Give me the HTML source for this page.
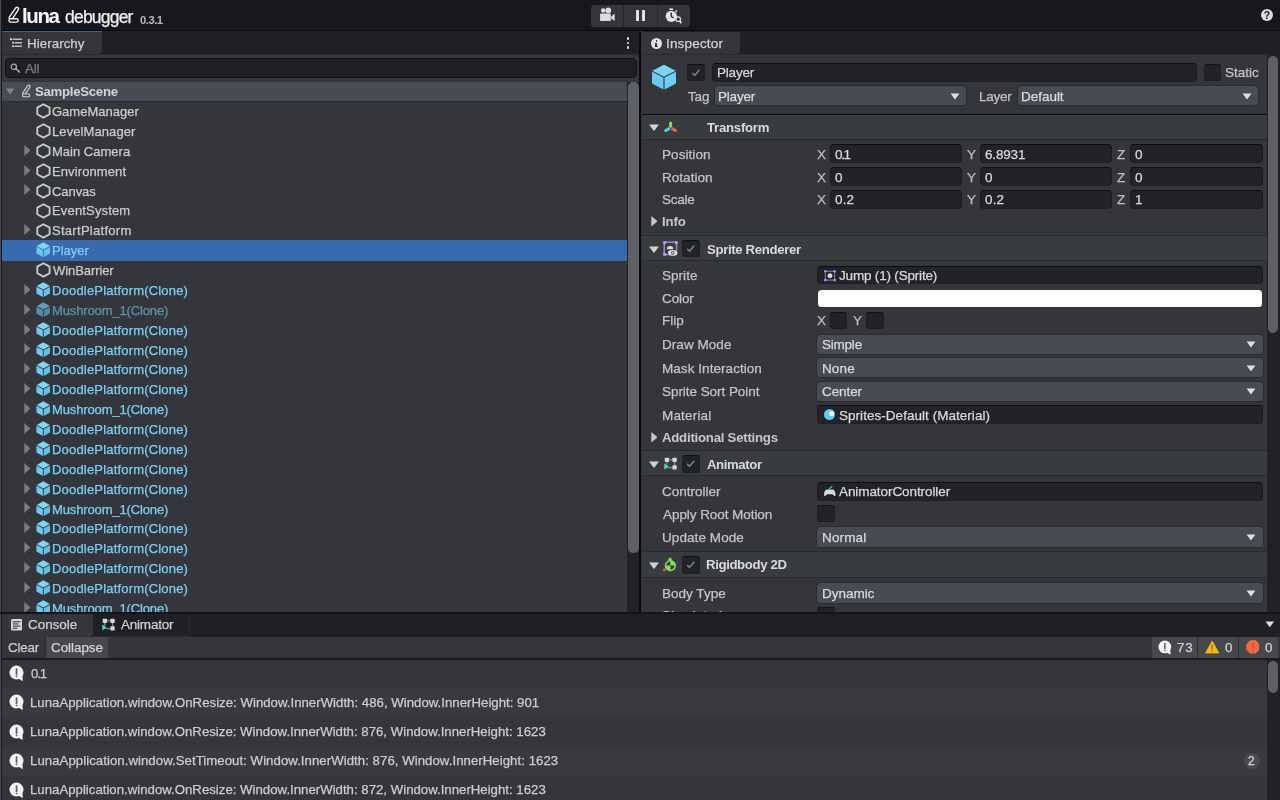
<!DOCTYPE html>
<html><head><meta charset="utf-8"><title>luna debugger</title>
<style>
*{box-sizing:border-box;margin:0;padding:0}
html,body{width:1280px;height:800px;overflow:hidden;background:#35363b}
body{font-family:"Liberation Sans",sans-serif;font-size:13px;color:#d2d2d2;position:relative}
#r{position:absolute;left:0;top:0;width:1280px;height:800px;overflow:hidden;will-change:transform}
.ab{position:absolute}
.t{position:absolute;white-space:nowrap;line-height:20px;height:20px;-webkit-text-stroke:.25px}
.b{font-weight:bold;-webkit-text-stroke:0}
.cb{background:#222328;border-radius:2.5px;border:1px solid #1e1f23;border-top:1.3px solid #121316}
.inp{position:absolute;background:#222328;border-radius:4px;border-top:1.1px solid #0c0d0f;border-left:1px solid #1b1c20;border-right:1px solid #1b1c20;border-bottom:1px solid #202125}
.dd{position:absolute;background:#474b54;border-radius:3.5px;box-shadow:0 0 0 .9px #2b2c31}
.hd{position:absolute;left:641.5px;width:625.5px;background:#393c3f;border-top:1.5px solid #1b1c1f;border-bottom:1px solid #2a2b2f}
</style></head><body><div id="r">

<div class="ab" style="left:0;top:0;width:1280px;height:31.4px;background:#16181d;border-bottom:1.6px solid #09090b"></div>
<svg class="ab" style="left:7px;top:6px" width="14" height="18" viewBox="0 0 14 18"><path d="M3.9 11.9 L9.9 3.0" stroke="#f2f2f2" stroke-width="4.7" stroke-linecap="round"/><path d="M3.9 11.9 L9.9 3.0" stroke="#16181d" stroke-width="1.9" stroke-linecap="round"/><path d="M3.75 14.45 L9.45 14.45" stroke="#f2f2f2" stroke-width="4.8" stroke-linecap="round"/><path d="M3.75 14.45 L9.45 14.45" stroke="#16181d" stroke-width="2.1" stroke-linecap="round"/></svg>
<div class="t b" style="left:22px;top:3.5px;font-size:20.5px;color:#fff;line-height:24px;height:24px;letter-spacing:-1.397px;">luna</div>
<div class="t" style="left:65px;top:6.0px;font-size:17.5px;color:#f0f0f0;line-height:22px;height:22px;letter-spacing:-0.789px;">debugger</div>
<div class="t b" style="left:140px;top:12.0px;font-size:11.3px;color:#b6b7ba;line-height:16px;height:16px;letter-spacing:-0.503px;">0.3.1</div>
<div class="ab" style="left:591px;top:4.7px;width:99px;height:21.9px;background:#35363b;border-radius:3.5px"></div>
<div class="ab" style="left:623px;top:4.7px;width:1px;height:21.9px;background:#26272b;"></div>
<div class="ab" style="left:656.8px;top:4.7px;width:1px;height:21.9px;background:#26272b;"></div>
<svg class="ab" style="left:599px;top:7px" width="17" height="15" viewBox="0 0 17 15"><g fill="#dadde0"><circle cx="4.2" cy="3.6" r="2.25"/><circle cx="9.3" cy="3.4" r="2.85"/><rect x="1.1" y="6.4" width="10.7" height="7.7" rx="0.9"/><path d="M11.8 10 L15.7 6.6 L15.7 13.8 L11.8 11.6Z"/></g></svg>
<div class="ab" style="left:635.9px;top:9.6px;width:3.4px;height:11px;background:#dfe1e3;border-radius:.6px"></div>
<div class="ab" style="left:641.7px;top:9.6px;width:3.4px;height:11px;background:#dfe1e3;border-radius:.6px"></div>
<svg class="ab" style="left:665px;top:7.5px" width="18" height="17" viewBox="0 0 18 17"><rect x="4.4" y="0.4" width="3.6" height="1.6" fill="#e4e4e4"/><path d="M10.6 2.6 L11.9 3.9" stroke="#e4e4e4" stroke-width="1.4"/><circle cx="6.3" cy="8.3" r="5.6" fill="#e4e4e4"/><path d="M6.3 4.6 L6.3 8.6 L8.6 9.8" stroke="#35363b" stroke-width="1.5" fill="none"/><circle cx="13.2" cy="11.2" r="2.3" fill="#35363b" stroke="#e4e4e4" stroke-width="1.2"/><path d="M14.7 13 L16.4 15.2" stroke="#e4e4e4" stroke-width="1.5"/></svg>
<div class="ab" style="left:1260.9px;top:9px;width:12.1px;height:12.1px;border-radius:50%;background:#d9dde0"></div>
<div class="ab" style="left:1260.9px;top:9.4px;width:12.1px;height:12px;color:#16181d;font-size:10.5px;font-weight:bold;line-height:12px;text-align:center">?</div>
<div class="ab" style="left:1278.9px;top:31px;width:1.1px;height:769px;background:#000;"></div>
<div class="ab" style="left:0px;top:0px;width:1.2px;height:800px;background:#4a4c52;"></div>
<div class="ab" style="left:1.2px;top:31px;width:1px;height:769px;background:#17181b;"></div>
<div class="ab" style="left:2px;top:31px;width:637.5px;height:23.3px;background:#1f2025;"></div>
<div class="ab" style="left:2px;top:31.2px;width:99.5px;height:23px;background:#35363b;border-top:1.9px solid #38659f;border-bottom-right-radius:4px"></div>
<svg class="ab" style="left:10px;top:38.3px" width="12.4" height="9.4" viewBox="0 0 12.4 9.4"><g fill="#d4d4d4"><rect x="0" y="0.2" width="2" height="2"/><rect x="2.1" y="3.8" width="1.8" height="1.8"/><rect x="2.1" y="7.3" width="1.8" height="1.8"/></g><g fill="#bcbcbc"><rect x="2.6" y="0.5" width="9.6" height="1.5"/><rect x="4.5" y="4" width="7.7" height="1.5"/><rect x="4.5" y="7.5" width="7.7" height="1.5"/></g></svg>
<div class="t" style="left:27px;top:33.5px;font-size:13.3px;color:#cdcdcd;letter-spacing:0.073px;">Hierarchy</div>
<div class="ab" style="left:626.6px;top:37.3px;width:2.6px;height:2.6px;background:#e0e0e0;border-radius:50%"></div>
<div class="ab" style="left:626.6px;top:41.8px;width:2.6px;height:2.6px;background:#e0e0e0;border-radius:50%"></div>
<div class="ab" style="left:626.6px;top:46.3px;width:2.6px;height:2.6px;background:#e0e0e0;border-radius:50%"></div>
<div class="ab" style="left:4.8px;top:58.3px;width:632.4px;height:19.6px;background:#1f2025;border:1.2px solid #101114;border-radius:4.5px"></div>
<svg class="ab" style="left:10.2px;top:63.3px" width="11" height="11" viewBox="0 0 11 11"><circle cx="3.8" cy="3.8" r="2.65" fill="none" stroke="#adadad" stroke-width="1.2"/><path d="M5.8 5.8 L9.6 9.1" stroke="#adadad" stroke-width="1.45" stroke-linecap="round"/></svg>
<div class="t" style="left:25px;top:58.5px;font-size:13.5px;color:#7a7b7f;letter-spacing:-0.264px;">All</div>
<div class="ab" style="left:2px;top:81.6px;width:625.3px;height:19.575px;background:#474b54;"></div>
<div class="ab" style="left:2px;top:100.975px;width:625.3px;height:1px;background:#2a2b2f;"></div>
<svg class="ab" style="left:5px;top:88.19999999999999px" width="10" height="6.6" viewBox="0 0 10 7"><path d="M0.3 0.5 L9.7 0.5 L5 6.8Z" fill="#808186"/></svg>
<svg class="ab" style="left:21.2px;top:84.0px" width="11" height="14.2" viewBox="0 0 14 18"><path d="M3.9 11.9 L9.9 3.0" stroke="#d0d0d0" stroke-width="4.7" stroke-linecap="round"/><path d="M3.9 11.9 L9.9 3.0" stroke="#474b54" stroke-width="1.9" stroke-linecap="round"/><path d="M3.75 14.45 L9.45 14.45" stroke="#d0d0d0" stroke-width="4.8" stroke-linecap="round"/><path d="M3.75 14.45 L9.45 14.45" stroke="#474b54" stroke-width="2.1" stroke-linecap="round"/></svg>
<div class="t b" style="left:35px;top:81.5px;font-size:13.2px;color:#d4d4d4;letter-spacing:-0.276px;">SampleScene</div>
<div class="ab" style="left:0;top:101px;width:639px;height:511px;overflow:hidden">
<svg class="ab" style="left:35.65px;top:2.475px" width="15" height="16" viewBox="0 0 15 16"><path d="M7.45 1.25 L13.6 4.65 L13.6 11.2 L7.45 14.6 L1.3 11.2 L1.3 4.65Z" fill="none" stroke="#c6cbce" stroke-width="1.85" stroke-linejoin="round"/></svg>
<div class="t" style="left:52px;top:0.5px;font-size:13px;color:#cccccc;letter-spacing:0.002px;">GameManager</div>
<svg class="ab" style="left:35.65px;top:22.35px" width="15" height="16" viewBox="0 0 15 16"><path d="M7.45 1.25 L13.6 4.65 L13.6 11.2 L7.45 14.6 L1.3 11.2 L1.3 4.65Z" fill="none" stroke="#c6cbce" stroke-width="1.85" stroke-linejoin="round"/></svg>
<div class="t" style="left:52px;top:20.5px;font-size:13px;color:#cccccc;letter-spacing:0.089px;">LevelManager</div>
<svg class="ab" style="left:23.5px;top:43.725px" width="6.8" height="11" viewBox="0 0 7 10.4" preserveAspectRatio="none"><path d="M0.3 0.1 L6.8 5.2 L0.3 10.3Z" fill="#7b7c80"/></svg>
<svg class="ab" style="left:35.65px;top:42.225px" width="15" height="16" viewBox="0 0 15 16"><path d="M7.45 1.25 L13.6 4.65 L13.6 11.2 L7.45 14.6 L1.3 11.2 L1.3 4.65Z" fill="none" stroke="#c6cbce" stroke-width="1.85" stroke-linejoin="round"/></svg>
<div class="t" style="left:52px;top:40.5px;font-size:13px;color:#cccccc;letter-spacing:0.012px;">Main Camera</div>
<svg class="ab" style="left:23.5px;top:63.6px" width="6.8" height="11" viewBox="0 0 7 10.4" preserveAspectRatio="none"><path d="M0.3 0.1 L6.8 5.2 L0.3 10.3Z" fill="#7b7c80"/></svg>
<svg class="ab" style="left:35.65px;top:62.1px" width="15" height="16" viewBox="0 0 15 16"><path d="M7.45 1.25 L13.6 4.65 L13.6 11.2 L7.45 14.6 L1.3 11.2 L1.3 4.65Z" fill="none" stroke="#c6cbce" stroke-width="1.85" stroke-linejoin="round"/></svg>
<div class="t" style="left:52px;top:60.5px;font-size:13px;color:#cccccc;letter-spacing:0.103px;">Environment</div>
<svg class="ab" style="left:23.5px;top:83.475px" width="6.8" height="11" viewBox="0 0 7 10.4" preserveAspectRatio="none"><path d="M0.3 0.1 L6.8 5.2 L0.3 10.3Z" fill="#7b7c80"/></svg>
<svg class="ab" style="left:35.65px;top:81.975px" width="15" height="16" viewBox="0 0 15 16"><path d="M7.45 1.25 L13.6 4.65 L13.6 11.2 L7.45 14.6 L1.3 11.2 L1.3 4.65Z" fill="none" stroke="#c6cbce" stroke-width="1.85" stroke-linejoin="round"/></svg>
<div class="t" style="left:52px;top:80.5px;font-size:13px;color:#cccccc;letter-spacing:-0.063px;">Canvas</div>
<svg class="ab" style="left:35.65px;top:101.85px" width="15" height="16" viewBox="0 0 15 16"><path d="M7.45 1.25 L13.6 4.65 L13.6 11.2 L7.45 14.6 L1.3 11.2 L1.3 4.65Z" fill="none" stroke="#c6cbce" stroke-width="1.85" stroke-linejoin="round"/></svg>
<div class="t" style="left:52px;top:99.5px;font-size:13px;color:#cccccc;letter-spacing:0.161px;">EventSystem</div>
<svg class="ab" style="left:23.5px;top:123.225px" width="6.8" height="11" viewBox="0 0 7 10.4" preserveAspectRatio="none"><path d="M0.3 0.1 L6.8 5.2 L0.3 10.3Z" fill="#7b7c80"/></svg>
<svg class="ab" style="left:35.65px;top:121.725px" width="15" height="16" viewBox="0 0 15 16"><path d="M7.45 1.25 L13.6 4.65 L13.6 11.2 L7.45 14.6 L1.3 11.2 L1.3 4.65Z" fill="none" stroke="#c6cbce" stroke-width="1.85" stroke-linejoin="round"/></svg>
<div class="t" style="left:52px;top:119.5px;font-size:13px;color:#cccccc;letter-spacing:0.286px;">StartPlatform</div>
<div class="ab" style="left:2px;top:139.05px;width:625.3px;height:20.625px;background:#386bad;"></div>
<svg class="ab" style="left:35.5px;top:141.2px" width="14.6" height="15.21" viewBox="0 0 16 16" preserveAspectRatio="none"><path d="M8 0.3 L15.2 4.1 L8 7.9 L0.8 4.1Z" fill="#7fd6f7"/><path d="M0.5 5.1 L7.5 8.8 L7.5 15.8 L0.5 12.1Z" fill="#6ccaf0"/><path d="M15.5 5.1 L8.5 8.8 L8.5 15.8 L15.5 12.1Z" fill="#62c0ea"/></svg>
<div class="t" style="left:52px;top:139.5px;font-size:13px;color:#79d0f6;letter-spacing:-0.016px;">Player</div>
<svg class="ab" style="left:35.65px;top:161.475px" width="15" height="16" viewBox="0 0 15 16"><path d="M7.45 1.25 L13.6 4.65 L13.6 11.2 L7.45 14.6 L1.3 11.2 L1.3 4.65Z" fill="none" stroke="#c6cbce" stroke-width="1.85" stroke-linejoin="round"/></svg>
<div class="t" style="left:53px;top:159.5px;font-size:13px;color:#cccccc;letter-spacing:-0.077px;">WinBarrier</div>
<svg class="ab" style="left:23.5px;top:182.85px" width="6.8" height="11" viewBox="0 0 7 10.4" preserveAspectRatio="none"><path d="M0.3 0.1 L6.8 5.2 L0.3 10.3Z" fill="#7b7c80"/></svg>
<svg class="ab" style="left:35.5px;top:180.95px" width="14.6" height="15.21" viewBox="0 0 16 16" preserveAspectRatio="none"><path d="M8 0.3 L15.2 4.1 L8 7.9 L0.8 4.1Z" fill="#7fd6f7"/><path d="M0.5 5.1 L7.5 8.8 L7.5 15.8 L0.5 12.1Z" fill="#6ccaf0"/><path d="M15.5 5.1 L8.5 8.8 L8.5 15.8 L15.5 12.1Z" fill="#62c0ea"/></svg>
<div class="t" style="left:52px;top:179.5px;font-size:13px;color:#79d0f6;letter-spacing:0.185px;">DoodlePlatform(Clone)</div>
<svg class="ab" style="left:23.5px;top:202.725px" width="6.8" height="11" viewBox="0 0 7 10.4" preserveAspectRatio="none"><path d="M0.3 0.1 L6.8 5.2 L0.3 10.3Z" fill="#7b7c80"/></svg>
<svg class="ab" style="left:35.5px;top:200.825px" width="14.6" height="15.21" viewBox="0 0 16 16" preserveAspectRatio="none"><path d="M8 0.3 L15.2 4.1 L8 7.9 L0.8 4.1Z" fill="#5e9cb5"/><path d="M0.5 5.1 L7.5 8.8 L7.5 15.8 L0.5 12.1Z" fill="#5492ab"/><path d="M15.5 5.1 L8.5 8.8 L8.5 15.8 L15.5 12.1Z" fill="#4b87a0"/></svg>
<div class="t" style="left:52px;top:199.5px;font-size:13px;color:#5c93ab;letter-spacing:-0.135px;">Mushroom_1(Clone)</div>
<svg class="ab" style="left:23.5px;top:222.6px" width="6.8" height="11" viewBox="0 0 7 10.4" preserveAspectRatio="none"><path d="M0.3 0.1 L6.8 5.2 L0.3 10.3Z" fill="#7b7c80"/></svg>
<svg class="ab" style="left:35.5px;top:220.7px" width="14.6" height="15.21" viewBox="0 0 16 16" preserveAspectRatio="none"><path d="M8 0.3 L15.2 4.1 L8 7.9 L0.8 4.1Z" fill="#7fd6f7"/><path d="M0.5 5.1 L7.5 8.8 L7.5 15.8 L0.5 12.1Z" fill="#6ccaf0"/><path d="M15.5 5.1 L8.5 8.8 L8.5 15.8 L15.5 12.1Z" fill="#62c0ea"/></svg>
<div class="t" style="left:52px;top:219.5px;font-size:13px;color:#79d0f6;letter-spacing:0.185px;">DoodlePlatform(Clone)</div>
<svg class="ab" style="left:23.5px;top:242.475px" width="6.8" height="11" viewBox="0 0 7 10.4" preserveAspectRatio="none"><path d="M0.3 0.1 L6.8 5.2 L0.3 10.3Z" fill="#7b7c80"/></svg>
<svg class="ab" style="left:35.5px;top:240.575px" width="14.6" height="15.21" viewBox="0 0 16 16" preserveAspectRatio="none"><path d="M8 0.3 L15.2 4.1 L8 7.9 L0.8 4.1Z" fill="#7fd6f7"/><path d="M0.5 5.1 L7.5 8.8 L7.5 15.8 L0.5 12.1Z" fill="#6ccaf0"/><path d="M15.5 5.1 L8.5 8.8 L8.5 15.8 L15.5 12.1Z" fill="#62c0ea"/></svg>
<div class="t" style="left:52px;top:239.5px;font-size:13px;color:#79d0f6;letter-spacing:0.185px;">DoodlePlatform(Clone)</div>
<svg class="ab" style="left:23.5px;top:262.35px" width="6.8" height="11" viewBox="0 0 7 10.4" preserveAspectRatio="none"><path d="M0.3 0.1 L6.8 5.2 L0.3 10.3Z" fill="#7b7c80"/></svg>
<svg class="ab" style="left:35.5px;top:260.45px" width="14.6" height="15.21" viewBox="0 0 16 16" preserveAspectRatio="none"><path d="M8 0.3 L15.2 4.1 L8 7.9 L0.8 4.1Z" fill="#7fd6f7"/><path d="M0.5 5.1 L7.5 8.8 L7.5 15.8 L0.5 12.1Z" fill="#6ccaf0"/><path d="M15.5 5.1 L8.5 8.8 L8.5 15.8 L15.5 12.1Z" fill="#62c0ea"/></svg>
<div class="t" style="left:52px;top:258.5px;font-size:13px;color:#79d0f6;letter-spacing:0.185px;">DoodlePlatform(Clone)</div>
<svg class="ab" style="left:23.5px;top:282.225px" width="6.8" height="11" viewBox="0 0 7 10.4" preserveAspectRatio="none"><path d="M0.3 0.1 L6.8 5.2 L0.3 10.3Z" fill="#7b7c80"/></svg>
<svg class="ab" style="left:35.5px;top:280.325px" width="14.6" height="15.21" viewBox="0 0 16 16" preserveAspectRatio="none"><path d="M8 0.3 L15.2 4.1 L8 7.9 L0.8 4.1Z" fill="#7fd6f7"/><path d="M0.5 5.1 L7.5 8.8 L7.5 15.8 L0.5 12.1Z" fill="#6ccaf0"/><path d="M15.5 5.1 L8.5 8.8 L8.5 15.8 L15.5 12.1Z" fill="#62c0ea"/></svg>
<div class="t" style="left:52px;top:278.5px;font-size:13px;color:#79d0f6;letter-spacing:0.185px;">DoodlePlatform(Clone)</div>
<svg class="ab" style="left:23.5px;top:302.1px" width="6.8" height="11" viewBox="0 0 7 10.4" preserveAspectRatio="none"><path d="M0.3 0.1 L6.8 5.2 L0.3 10.3Z" fill="#7b7c80"/></svg>
<svg class="ab" style="left:35.5px;top:300.2px" width="14.6" height="15.21" viewBox="0 0 16 16" preserveAspectRatio="none"><path d="M8 0.3 L15.2 4.1 L8 7.9 L0.8 4.1Z" fill="#7fd6f7"/><path d="M0.5 5.1 L7.5 8.8 L7.5 15.8 L0.5 12.1Z" fill="#6ccaf0"/><path d="M15.5 5.1 L8.5 8.8 L8.5 15.8 L15.5 12.1Z" fill="#62c0ea"/></svg>
<div class="t" style="left:52px;top:298.5px;font-size:13px;color:#79d0f6;letter-spacing:-0.135px;">Mushroom_1(Clone)</div>
<svg class="ab" style="left:23.5px;top:321.975px" width="6.8" height="11" viewBox="0 0 7 10.4" preserveAspectRatio="none"><path d="M0.3 0.1 L6.8 5.2 L0.3 10.3Z" fill="#7b7c80"/></svg>
<svg class="ab" style="left:35.5px;top:320.075px" width="14.6" height="15.21" viewBox="0 0 16 16" preserveAspectRatio="none"><path d="M8 0.3 L15.2 4.1 L8 7.9 L0.8 4.1Z" fill="#7fd6f7"/><path d="M0.5 5.1 L7.5 8.8 L7.5 15.8 L0.5 12.1Z" fill="#6ccaf0"/><path d="M15.5 5.1 L8.5 8.8 L8.5 15.8 L15.5 12.1Z" fill="#62c0ea"/></svg>
<div class="t" style="left:52px;top:318.5px;font-size:13px;color:#79d0f6;letter-spacing:0.185px;">DoodlePlatform(Clone)</div>
<svg class="ab" style="left:23.5px;top:341.85px" width="6.8" height="11" viewBox="0 0 7 10.4" preserveAspectRatio="none"><path d="M0.3 0.1 L6.8 5.2 L0.3 10.3Z" fill="#7b7c80"/></svg>
<svg class="ab" style="left:35.5px;top:339.95px" width="14.6" height="15.21" viewBox="0 0 16 16" preserveAspectRatio="none"><path d="M8 0.3 L15.2 4.1 L8 7.9 L0.8 4.1Z" fill="#7fd6f7"/><path d="M0.5 5.1 L7.5 8.8 L7.5 15.8 L0.5 12.1Z" fill="#6ccaf0"/><path d="M15.5 5.1 L8.5 8.8 L8.5 15.8 L15.5 12.1Z" fill="#62c0ea"/></svg>
<div class="t" style="left:52px;top:338.5px;font-size:13px;color:#79d0f6;letter-spacing:0.185px;">DoodlePlatform(Clone)</div>
<svg class="ab" style="left:23.5px;top:361.725px" width="6.8" height="11" viewBox="0 0 7 10.4" preserveAspectRatio="none"><path d="M0.3 0.1 L6.8 5.2 L0.3 10.3Z" fill="#7b7c80"/></svg>
<svg class="ab" style="left:35.5px;top:359.825px" width="14.6" height="15.21" viewBox="0 0 16 16" preserveAspectRatio="none"><path d="M8 0.3 L15.2 4.1 L8 7.9 L0.8 4.1Z" fill="#7fd6f7"/><path d="M0.5 5.1 L7.5 8.8 L7.5 15.8 L0.5 12.1Z" fill="#6ccaf0"/><path d="M15.5 5.1 L8.5 8.8 L8.5 15.8 L15.5 12.1Z" fill="#62c0ea"/></svg>
<div class="t" style="left:52px;top:358.5px;font-size:13px;color:#79d0f6;letter-spacing:0.185px;">DoodlePlatform(Clone)</div>
<svg class="ab" style="left:23.5px;top:381.6px" width="6.8" height="11" viewBox="0 0 7 10.4" preserveAspectRatio="none"><path d="M0.3 0.1 L6.8 5.2 L0.3 10.3Z" fill="#7b7c80"/></svg>
<svg class="ab" style="left:35.5px;top:379.7px" width="14.6" height="15.21" viewBox="0 0 16 16" preserveAspectRatio="none"><path d="M8 0.3 L15.2 4.1 L8 7.9 L0.8 4.1Z" fill="#7fd6f7"/><path d="M0.5 5.1 L7.5 8.8 L7.5 15.8 L0.5 12.1Z" fill="#6ccaf0"/><path d="M15.5 5.1 L8.5 8.8 L8.5 15.8 L15.5 12.1Z" fill="#62c0ea"/></svg>
<div class="t" style="left:52px;top:378.5px;font-size:13px;color:#79d0f6;letter-spacing:0.185px;">DoodlePlatform(Clone)</div>
<svg class="ab" style="left:23.5px;top:401.475px" width="6.8" height="11" viewBox="0 0 7 10.4" preserveAspectRatio="none"><path d="M0.3 0.1 L6.8 5.2 L0.3 10.3Z" fill="#7b7c80"/></svg>
<svg class="ab" style="left:35.5px;top:399.575px" width="14.6" height="15.21" viewBox="0 0 16 16" preserveAspectRatio="none"><path d="M8 0.3 L15.2 4.1 L8 7.9 L0.8 4.1Z" fill="#7fd6f7"/><path d="M0.5 5.1 L7.5 8.8 L7.5 15.8 L0.5 12.1Z" fill="#6ccaf0"/><path d="M15.5 5.1 L8.5 8.8 L8.5 15.8 L15.5 12.1Z" fill="#62c0ea"/></svg>
<div class="t" style="left:52px;top:398.5px;font-size:13px;color:#79d0f6;letter-spacing:-0.135px;">Mushroom_1(Clone)</div>
<svg class="ab" style="left:23.5px;top:421.35px" width="6.8" height="11" viewBox="0 0 7 10.4" preserveAspectRatio="none"><path d="M0.3 0.1 L6.8 5.2 L0.3 10.3Z" fill="#7b7c80"/></svg>
<svg class="ab" style="left:35.5px;top:419.45px" width="14.6" height="15.21" viewBox="0 0 16 16" preserveAspectRatio="none"><path d="M8 0.3 L15.2 4.1 L8 7.9 L0.8 4.1Z" fill="#7fd6f7"/><path d="M0.5 5.1 L7.5 8.8 L7.5 15.8 L0.5 12.1Z" fill="#6ccaf0"/><path d="M15.5 5.1 L8.5 8.8 L8.5 15.8 L15.5 12.1Z" fill="#62c0ea"/></svg>
<div class="t" style="left:52px;top:417.5px;font-size:13px;color:#79d0f6;letter-spacing:0.185px;">DoodlePlatform(Clone)</div>
<svg class="ab" style="left:23.5px;top:441.225px" width="6.8" height="11" viewBox="0 0 7 10.4" preserveAspectRatio="none"><path d="M0.3 0.1 L6.8 5.2 L0.3 10.3Z" fill="#7b7c80"/></svg>
<svg class="ab" style="left:35.5px;top:439.325px" width="14.6" height="15.21" viewBox="0 0 16 16" preserveAspectRatio="none"><path d="M8 0.3 L15.2 4.1 L8 7.9 L0.8 4.1Z" fill="#7fd6f7"/><path d="M0.5 5.1 L7.5 8.8 L7.5 15.8 L0.5 12.1Z" fill="#6ccaf0"/><path d="M15.5 5.1 L8.5 8.8 L8.5 15.8 L15.5 12.1Z" fill="#62c0ea"/></svg>
<div class="t" style="left:52px;top:437.5px;font-size:13px;color:#79d0f6;letter-spacing:0.185px;">DoodlePlatform(Clone)</div>
<svg class="ab" style="left:23.5px;top:461.1px" width="6.8" height="11" viewBox="0 0 7 10.4" preserveAspectRatio="none"><path d="M0.3 0.1 L6.8 5.2 L0.3 10.3Z" fill="#7b7c80"/></svg>
<svg class="ab" style="left:35.5px;top:459.2px" width="14.6" height="15.21" viewBox="0 0 16 16" preserveAspectRatio="none"><path d="M8 0.3 L15.2 4.1 L8 7.9 L0.8 4.1Z" fill="#7fd6f7"/><path d="M0.5 5.1 L7.5 8.8 L7.5 15.8 L0.5 12.1Z" fill="#6ccaf0"/><path d="M15.5 5.1 L8.5 8.8 L8.5 15.8 L15.5 12.1Z" fill="#62c0ea"/></svg>
<div class="t" style="left:52px;top:457.5px;font-size:13px;color:#79d0f6;letter-spacing:0.185px;">DoodlePlatform(Clone)</div>
<svg class="ab" style="left:23.5px;top:480.975px" width="6.8" height="11" viewBox="0 0 7 10.4" preserveAspectRatio="none"><path d="M0.3 0.1 L6.8 5.2 L0.3 10.3Z" fill="#7b7c80"/></svg>
<svg class="ab" style="left:35.5px;top:479.075px" width="14.6" height="15.21" viewBox="0 0 16 16" preserveAspectRatio="none"><path d="M8 0.3 L15.2 4.1 L8 7.9 L0.8 4.1Z" fill="#7fd6f7"/><path d="M0.5 5.1 L7.5 8.8 L7.5 15.8 L0.5 12.1Z" fill="#6ccaf0"/><path d="M15.5 5.1 L8.5 8.8 L8.5 15.8 L15.5 12.1Z" fill="#62c0ea"/></svg>
<div class="t" style="left:52px;top:477.5px;font-size:13px;color:#79d0f6;letter-spacing:0.185px;">DoodlePlatform(Clone)</div>
<svg class="ab" style="left:23.5px;top:500.85px" width="6.8" height="11" viewBox="0 0 7 10.4" preserveAspectRatio="none"><path d="M0.3 0.1 L6.8 5.2 L0.3 10.3Z" fill="#7b7c80"/></svg>
<svg class="ab" style="left:35.5px;top:498.95px" width="14.6" height="15.21" viewBox="0 0 16 16" preserveAspectRatio="none"><path d="M8 0.3 L15.2 4.1 L8 7.9 L0.8 4.1Z" fill="#7fd6f7"/><path d="M0.5 5.1 L7.5 8.8 L7.5 15.8 L0.5 12.1Z" fill="#6ccaf0"/><path d="M15.5 5.1 L8.5 8.8 L8.5 15.8 L15.5 12.1Z" fill="#62c0ea"/></svg>
<div class="t" style="left:52px;top:497.5px;font-size:13px;color:#79d0f6;letter-spacing:-0.135px;">Mushroom_1(Clone)</div>
</div>
<div class="ab" style="left:627.3px;top:81.5px;width:12.3px;height:530.5px;background:#212227;"></div>
<div class="ab" style="left:628.4px;top:82.3px;width:10.2px;height:470.8px;background:#5f6065;border-radius:5px"></div>
<div class="ab" style="left:2px;top:54.1px;width:637.4px;height:1px;background:#2b2c30;"></div>
<div class="ab" style="left:641.5px;top:54.1px;width:625.6px;height:1px;background:#2b2c30;"></div>
<div class="ab" style="left:639.4px;top:31.5px;width:2.1px;height:581px;background:#0a0a0c;"></div>
<div class="ab" style="left:641.5px;top:31px;width:638.5px;height:23.3px;background:#1f2025;"></div>
<div class="ab" style="left:641.5px;top:31.5px;width:98px;height:22.7px;background:#35363b;border-bottom-right-radius:4px"></div>
<div class="ab" style="left:650.8px;top:37.8px;width:11.2px;height:11.2px;background:#e2e2e2;border-radius:50%"></div>
<div class="ab" style="left:655.5px;top:39.8px;width:1.8px;height:1.8px;background:#35363b;"></div>
<div class="ab" style="left:655.4px;top:42.6px;width:2px;height:4.6px;background:#35363b;"></div>
<div class="ab" style="left:654.6px;top:42.6px;width:1.4px;height:1px;background:#35363b;"></div>
<div class="ab" style="left:654.5px;top:46.4px;width:3.8px;height:1px;background:#35363b;"></div>
<div class="t" style="left:666px;top:33.5px;font-size:13.5px;color:#d2d2d2;letter-spacing:0.18px;">Inspector</div>
<div class="ab" style="left:1267.1px;top:54.3px;width:12.9px;height:558px;background:#212227;"></div>
<div class="ab" style="left:1268.1px;top:56px;width:9.9px;height:276.6px;background:#5f6065;border-radius:5px"></div>
<svg class="ab" style="left:651px;top:63.5px" width="26" height="26" viewBox="0 0 26 26"><path d="M13 0.8 L25 6.8 L25 19.4 L13 25.6 L1 19.4 L1 6.8Z" fill="#2c4b5c"/><path d="M13 0.8 L24.6 6.7 L13 12.5 L1.4 6.7Z" fill="#7bd4f6"/><path d="M1 7.8 L12.4 13.5 L12.4 25.4 L1 19.5Z" fill="#6bcaf0"/><path d="M25 7.8 L13.6 13.5 L13.6 25.4 L25 19.5Z" fill="#6fcdf3"/></svg>
<div class="ab cb" style="left:687px;top:63.5px;width:18px;height:17.6px"><svg class="ab" style="left:0;top:0" width="100%" height="100%" viewBox="0 0 18 18"><path d="M4.7 9.3 L7.6 12 L13.1 5.5" fill="none" stroke="#7b7c80" stroke-width="1.9"/></svg></div>
<div class="inp" style="left:711.8px;top:62.8px;width:484.8px;height:18.8px"></div>
<div class="t" style="left:717px;top:62.5px;font-size:13.5px;color:#d6d6d6;letter-spacing:-0.204px;">Player</div>
<div class="ab cb" style="left:1203.6px;top:63.6px;width:17.2px;height:17.3px"></div>
<div class="t" style="left:1225px;top:62.5px;font-size:13.5px;color:#c4c4c4;letter-spacing:0.022px;">Static</div>
<div class="t" style="left:688px;top:86.5px;font-size:13.5px;color:#c4c4c4;letter-spacing:-0.148px;">Tag</div>
<div class="dd" style="left:714.6px;top:86.4px;width:251.6px;height:19px"></div>
<div class="t" style="left:718px;top:86.5px;font-size:13.5px;color:#dcdcdc;letter-spacing:-0.204px;">Player</div>
<svg class="ab" style="left:950px;top:93.2px" width="10" height="6.6" viewBox="0 0 10 7"><path d="M0.3 0.5 L9.7 0.5 L5 6.8Z" fill="#e0e0e0"/></svg>
<div class="t" style="left:979px;top:86.5px;font-size:13.5px;color:#c4c4c4;letter-spacing:-0.256px;">Layer</div>
<div class="dd" style="left:1017.6px;top:86.4px;width:240.6px;height:19px"></div>
<div class="t" style="left:1021px;top:86.5px;font-size:13.5px;color:#dcdcdc;letter-spacing:-0.025px;">Default</div>
<svg class="ab" style="left:1241.8px;top:93.2px" width="10" height="6.6" viewBox="0 0 10 7"><path d="M0.3 0.5 L9.7 0.5 L5 6.8Z" fill="#e0e0e0"/></svg>
<div class="hd" style="top:113.9px;height:26px;border-top:1.2px solid #0b0b0d"></div>
<svg class="ab" style="left:647.8px;top:124.0px" width="12" height="7.3" viewBox="0 0 10 7"><path d="M0.3 0.5 L9.7 0.5 L5 6.8Z" fill="#d2d2d2"/></svg>
<div class="t b" style="left:707px;top:117.5px;font-size:13.2px;color:#dadada;letter-spacing:-0.253px;">Transform</div>
<svg class="ab" style="left:662px;top:120px" width="16" height="14" viewBox="0 0 16 14"><path d="M8.6 2.9 L8.6 6.2" stroke="#8ae04e" stroke-width="3" stroke-linecap="round"/><path d="M3.7 10.5 L6.7 8.9" stroke="#5cc8f5" stroke-width="3" stroke-linecap="round"/><path d="M10.5 8.9 L13.5 10.5" stroke="#ee5f57" stroke-width="3" stroke-linecap="round"/></svg>
<div class="t" style="left:662px;top:144.5px;font-size:13.5px;color:#c4c4c4;letter-spacing:0.065px;">Position</div>
<div class="t" style="left:817px;top:144.5px;font-size:13.5px;color:#bdbdbd;">X</div>
<div class="inp" style="left:830px;top:144.4px;width:131.5px;height:19px"></div>
<div class="t" style="left:835px;top:144.5px;font-size:13.5px;color:#dadada;letter-spacing:-1.317px;">0.1</div>
<div class="t" style="left:967px;top:144.5px;font-size:13.5px;color:#bdbdbd;">Y</div>
<div class="inp" style="left:980px;top:144.4px;width:131.5px;height:19px"></div>
<div class="t" style="left:985px;top:144.5px;font-size:13.5px;color:#dadada;letter-spacing:-0.167px;">6.8931</div>
<div class="t" style="left:1117px;top:144.5px;font-size:13.5px;color:#bdbdbd;">Z</div>
<div class="inp" style="left:1130px;top:144.4px;width:132.5px;height:19px"></div>
<div class="t" style="left:1135px;top:144.5px;font-size:13.5px;color:#dadada;">0</div>
<div class="t" style="left:662px;top:167.5px;font-size:13.5px;color:#c4c4c4;letter-spacing:0.029px;">Rotation</div>
<div class="t" style="left:817px;top:167.5px;font-size:13.5px;color:#bdbdbd;">X</div>
<div class="inp" style="left:830px;top:167.25px;width:131.5px;height:19px"></div>
<div class="t" style="left:835px;top:167.5px;font-size:13.5px;color:#dadada;">0</div>
<div class="t" style="left:967px;top:167.5px;font-size:13.5px;color:#bdbdbd;">Y</div>
<div class="inp" style="left:980px;top:167.25px;width:131.5px;height:19px"></div>
<div class="t" style="left:985px;top:167.5px;font-size:13.5px;color:#dadada;">0</div>
<div class="t" style="left:1117px;top:167.5px;font-size:13.5px;color:#bdbdbd;">Z</div>
<div class="inp" style="left:1130px;top:167.25px;width:132.5px;height:19px"></div>
<div class="t" style="left:1135px;top:167.5px;font-size:13.5px;color:#dadada;">0</div>
<div class="t" style="left:662px;top:189.5px;font-size:13.5px;color:#c4c4c4;letter-spacing:-0.259px;">Scale</div>
<div class="t" style="left:817px;top:189.5px;font-size:13.5px;color:#bdbdbd;">X</div>
<div class="inp" style="left:830px;top:190.1px;width:131.5px;height:19px"></div>
<div class="t" style="left:835px;top:189.5px;font-size:13.5px;color:#dadada;letter-spacing:0.183px;">0.2</div>
<div class="t" style="left:967px;top:189.5px;font-size:13.5px;color:#bdbdbd;">Y</div>
<div class="inp" style="left:980px;top:190.1px;width:131.5px;height:19px"></div>
<div class="t" style="left:985px;top:189.5px;font-size:13.5px;color:#dadada;letter-spacing:0.183px;">0.2</div>
<div class="t" style="left:1117px;top:189.5px;font-size:13.5px;color:#bdbdbd;">Z</div>
<div class="inp" style="left:1130px;top:190.1px;width:132.5px;height:19px"></div>
<div class="t" style="left:1135px;top:189.5px;font-size:13.5px;color:#dadada;">1</div>
<svg class="ab" style="left:650.7px;top:215.7px" width="6.8" height="10.6" viewBox="0 0 7 10.4" preserveAspectRatio="none"><path d="M0.3 0.1 L6.8 5.2 L0.3 10.3Z" fill="#cacaca"/></svg>
<div class="t b" style="left:662px;top:211.5px;font-size:13.2px;color:#c8c8c8;letter-spacing:-0.138px;">Info</div>
<div class="hd" style="top:235.3px;height:26.2px;border-top:1.4px solid #26272a"></div>
<svg class="ab" style="left:647.8px;top:245.7px" width="12" height="7.3" viewBox="0 0 10 7"><path d="M0.3 0.5 L9.7 0.5 L5 6.8Z" fill="#d2d2d2"/></svg>
<div class="t b" style="left:707px;top:239.5px;font-size:13.2px;color:#dadada;letter-spacing:-0.347px;">Sprite Renderer</div>
<svg class="ab" style="left:663px;top:241px" width="15" height="15.2" viewBox="0 0 15 15.2"><rect x="1.2" y="1.2" width="12.4" height="12.4" fill="none" stroke="#a08fe0" stroke-width="1.4"/><g fill="#b5a4f0"><circle cx="1.6" cy="1.6" r="1.6"/><circle cx="13.3" cy="1.6" r="1.6"/><circle cx="1.6" cy="13.3" r="1.6"/></g><path d="M3.9 8.2 A3.2 3.2 0 0 1 10.3 8.2Z" fill="#d8dadb"/><ellipse cx="9.7" cy="11.9" rx="5.4" ry="3.4" fill="#393c3f"/><ellipse cx="9.7" cy="11.9" rx="4.7" ry="2.8" fill="#e2e4e5"/><circle cx="9.7" cy="11.9" r="1.9" fill="#55585b"/><circle cx="9.7" cy="11.9" r="1.1" fill="#b9bbbc"/></svg>
<div class="ab cb" style="left:682.4px;top:240px;width:17.5px;height:17.2px"><svg class="ab" style="left:0;top:0" width="100%" height="100%" viewBox="0 0 18 18"><path d="M4.7 9.3 L7.6 12 L13.1 5.5" fill="none" stroke="#7b7c80" stroke-width="1.9"/></svg></div>
<div class="t" style="left:662px;top:265.5px;font-size:13.5px;color:#c4c4c4;letter-spacing:0.033px;">Sprite</div>
<div class="inp" style="left:817.3px;top:266.3px;width:445.3px;height:18.2px"></div>
<div class="t" style="left:839px;top:265.5px;font-size:13.5px;color:#dadada;letter-spacing:-0.186px;">Jump (1) (Sprite)</div>
<svg class="ab" style="left:823.7px;top:270.4px" width="12" height="11.4" viewBox="0 0 12 11.4"><rect x="1.3" y="1.3" width="9.4" height="8.8" fill="none" stroke="#8a7bc8" stroke-width="1"/><g fill="#a796e8"><circle cx="1.3" cy="1.3" r="1.3"/><circle cx="10.7" cy="1.3" r="1.3"/><circle cx="1.3" cy="10.1" r="1.3"/><circle cx="10.7" cy="10.1" r="1.3"/></g><circle cx="6" cy="5.7" r="2.5" fill="#d5dbdc"/></svg>
<div class="t" style="left:662px;top:288.5px;font-size:13.5px;color:#c4c4c4;letter-spacing:-0.113px;">Color</div>
<div class="ab" style="left:817.8px;top:289.8px;width:444.4px;height:17.4px;background:#fff;border-radius:3.5px"></div>
<div class="t" style="left:662px;top:310.5px;font-size:13.5px;color:#c4c4c4;letter-spacing:0.039px;">Flip</div>
<div class="t" style="left:817px;top:310.5px;font-size:13.5px;color:#bdbdbd;">X</div>
<div class="ab cb" style="left:829.8px;top:311.6px;width:17.4px;height:17.8px"></div>
<div class="t" style="left:853px;top:310.5px;font-size:13.5px;color:#bdbdbd;">Y</div>
<div class="ab cb" style="left:865.6px;top:311.6px;width:18px;height:17.8px"></div>
<div class="t" style="left:662px;top:334.5px;font-size:13.5px;color:#c4c4c4;letter-spacing:0.051px;">Draw Mode</div>
<div class="dd" style="left:817.3px;top:334.5px;width:445.3px;height:19.2px"></div>
<div class="t" style="left:822px;top:334.5px;font-size:13.5px;color:#dadada;letter-spacing:-0.226px;">Simple</div>
<svg class="ab" style="left:1245.6px;top:341.1px" width="10" height="6.6" viewBox="0 0 10 7"><path d="M0.3 0.5 L9.7 0.5 L5 6.8Z" fill="#e0e0e0"/></svg>
<div class="t" style="left:662px;top:358.5px;font-size:13.5px;color:#c4c4c4;letter-spacing:0.056px;">Mask Interaction</div>
<div class="dd" style="left:817.3px;top:358.1px;width:445.3px;height:19.3px"></div>
<div class="t" style="left:822px;top:358.5px;font-size:13.5px;color:#dadada;letter-spacing:0.12px;">None</div>
<svg class="ab" style="left:1245.6px;top:364.75px" width="10" height="6.6" viewBox="0 0 10 7"><path d="M0.3 0.5 L9.7 0.5 L5 6.8Z" fill="#e0e0e0"/></svg>
<div class="t" style="left:662px;top:381.5px;font-size:13.5px;color:#c4c4c4;letter-spacing:-0.054px;">Sprite Sort Point</div>
<div class="dd" style="left:817.3px;top:381.8px;width:445.3px;height:19.3px"></div>
<div class="t" style="left:822px;top:381.5px;font-size:13.5px;color:#dadada;letter-spacing:-0.082px;">Center</div>
<svg class="ab" style="left:1245.6px;top:388.45px" width="10" height="6.6" viewBox="0 0 10 7"><path d="M0.3 0.5 L9.7 0.5 L5 6.8Z" fill="#e0e0e0"/></svg>
<div class="t" style="left:662px;top:405.5px;font-size:13.5px;color:#c4c4c4;letter-spacing:0.175px;">Material</div>
<div class="inp" style="left:817.3px;top:405.2px;width:445.3px;height:19.2px"></div>
<div class="t" style="left:839px;top:405.5px;font-size:13.5px;color:#dadada;letter-spacing:0.037px;">Sprites-Default (Material)</div>
<div class="ab" style="left:824px;top:409.2px;width:11.2px;height:11.2px;background:#5fc8f2;border-radius:50%"></div>
<div class="ab" style="left:828.5px;top:410.8px;width:5.4px;height:5.4px;background:#f6f6f6;border-radius:50%"></div>
<svg class="ab" style="left:650.7px;top:431.9px" width="6.8" height="10.6" viewBox="0 0 7 10.4" preserveAspectRatio="none"><path d="M0.3 0.1 L6.8 5.2 L0.3 10.3Z" fill="#cacaca"/></svg>
<div class="t b" style="left:662px;top:427.5px;font-size:13.2px;color:#c8c8c8;letter-spacing:-0.229px;">Additional Settings</div>
<div class="hd" style="top:450px;height:26.4px;border-top:1.3px solid #28292c"></div>
<svg class="ab" style="left:647.8px;top:460.9px" width="12" height="7.3" viewBox="0 0 10 7"><path d="M0.3 0.5 L9.7 0.5 L5 6.8Z" fill="#d2d2d2"/></svg>
<div class="t b" style="left:707px;top:454.5px;font-size:13.2px;color:#dadada;letter-spacing:-0.403px;">Animator</div>
<svg class="ab" style="left:664px;top:457.3px" width="13.6" height="13.6" viewBox="0 0 14 14"><path d="M3.2 2.9 L11 2.9 L11 11 L4 11 M2.9 3.2 L2.9 8" stroke="#9fa3a5" stroke-width="1" fill="none"/><g fill="#d4d8da"><rect x="0.8" y="0.7" width="4.4" height="4.4" rx=".7"/><rect x="8.7" y="0.7" width="4.4" height="4.4" rx=".7"/><rect x="8.7" y="8.4" width="4.4" height="4.4" rx=".7"/></g><path d="M0.3 6.8 L4.9 9.9 L0.3 13Z" fill="#4be0c8"/></svg>
<div class="ab cb" style="left:682.4px;top:455.2px;width:17.5px;height:17.4px"><svg class="ab" style="left:0;top:0" width="100%" height="100%" viewBox="0 0 18 18"><path d="M4.7 9.3 L7.6 12 L13.1 5.5" fill="none" stroke="#7b7c80" stroke-width="1.9"/></svg></div>
<div class="t" style="left:662px;top:481.5px;font-size:13.5px;color:#c4c4c4;letter-spacing:0.01px;">Controller</div>
<div class="inp" style="left:817.3px;top:482px;width:445.3px;height:18.8px"></div>
<div class="t" style="left:839px;top:481.5px;font-size:13.5px;color:#dadada;letter-spacing:-0.08px;">AnimatorController</div>
<svg class="ab" style="left:822.6px;top:485px" width="13.6" height="12" viewBox="0 0 14 12"><path d="M4 4.4 L10 4.4 C12.6 4.4 13.6 10.6 12.4 11.2 C11.4 11.6 10.4 9.4 9.4 9.4 L4.6 9.4 C3.6 9.4 2.6 11.6 1.6 11.2 C0.4 10.6 1.4 4.4 4 4.4Z" fill="#dadada"/><path d="M6.6 4.4 C6.6 2.4 8.2 2.8 9.4 1" stroke="#38c8b4" stroke-width="1.3" fill="none"/></svg>
<div class="t" style="left:663px;top:504.5px;font-size:13.5px;color:#c4c4c4;letter-spacing:-0.062px;">Apply Root Motion</div>
<div class="ab cb" style="left:817.2px;top:504.9px;width:17.6px;height:17.3px"></div>
<div class="t" style="left:662px;top:527.5px;font-size:13.5px;color:#c4c4c4;letter-spacing:0.082px;">Update Mode</div>
<div class="dd" style="left:817.3px;top:527.1px;width:445.3px;height:19.5px"></div>
<div class="t" style="left:822px;top:527.5px;font-size:13.5px;color:#dadada;letter-spacing:0.146px;">Normal</div>
<svg class="ab" style="left:1245.6px;top:533.85px" width="10" height="6.6" viewBox="0 0 10 7"><path d="M0.3 0.5 L9.7 0.5 L5 6.8Z" fill="#e0e0e0"/></svg>
<div class="hd" style="top:550.9px;height:26.8px;border-top:1.1px solid #28292c"></div>
<svg class="ab" style="left:647.8px;top:561.8px" width="12" height="7.3" viewBox="0 0 10 7"><path d="M0.3 0.5 L9.7 0.5 L5 6.8Z" fill="#d2d2d2"/></svg>
<div class="t b" style="left:706px;top:554.5px;font-size:13.2px;color:#dadada;letter-spacing:-0.368px;">Rigidbody 2D</div>
<svg class="ab" style="left:662px;top:557px" width="16" height="16" viewBox="0 0 16 16"><circle cx="8.4" cy="8.6" r="5.6" fill="#7ee45a"/><circle cx="8.1" cy="2.4" r="1.6" fill="#7ee45a"/><path d="M8.4 8.6 L8.4 4.4 A4.2 4.2 0 0 0 4.2 8.6Z M8.4 8.6 L8.4 12.8 A4.2 4.2 0 0 0 12.6 8.6Z" fill="#33402f"/><circle cx="2.4" cy="12.8" r="1.5" fill="#e8505a"/></svg>
<div class="ab cb" style="left:682.4px;top:556px;width:17.5px;height:17.6px"><svg class="ab" style="left:0;top:0" width="100%" height="100%" viewBox="0 0 18 18"><path d="M4.7 9.3 L7.6 12 L13.1 5.5" fill="none" stroke="#7b7c80" stroke-width="1.9"/></svg></div>
<div class="t" style="left:662px;top:583.5px;font-size:13.5px;color:#c4c4c4;letter-spacing:0.018px;">Body Type</div>
<div class="dd" style="left:817.3px;top:583.2px;width:445.3px;height:19.6px"></div>
<div class="t" style="left:822px;top:583.5px;font-size:13.5px;color:#dadada;letter-spacing:-0.023px;">Dynamic</div>
<svg class="ab" style="left:1245.6px;top:590.0px" width="10" height="6.6" viewBox="0 0 10 7"><path d="M0.3 0.5 L9.7 0.5 L5 6.8Z" fill="#e0e0e0"/></svg>
<div class="ab" style="left:641px;top:600px;width:626px;height:12px;overflow:hidden">
<div class="t" style="left:21px;top:5.5px;font-size:13.5px;color:#c4c4c4;">Simulated</div>
<div class="ab cb" style="left:176.2px;top:6.9px;width:17.6px;height:17.6px"></div></div>
<div class="ab" style="left:0px;top:612px;width:1280px;height:1.7px;background:#131417;"></div>
<div class="ab" style="left:2px;top:613.6px;width:1278px;height:23px;background:#1f2025;"></div>
<div class="ab" style="left:2px;top:613.6px;width:91px;height:23px;background:#35363b;border-bottom-right-radius:4px"></div>
<div class="ab" style="left:93.4px;top:613.6px;width:97px;height:23px;border-right:1px solid #2c2d32;border-bottom:1px solid #2c2d32;border-bottom-right-radius:4px"></div>
<svg class="ab" style="left:11px;top:619.2px" width="11.4" height="11.6" viewBox="0 0 12 12"><rect x="0" y="0" width="12" height="12" rx="1.6" fill="#d8d8d8"/><g fill="#35363b"><rect x="1.8" y="2.2" width="8.2" height="1.1"/><rect x="1.8" y="4.5" width="6" height="1.1"/><rect x="1.8" y="6.8" width="8.2" height="1.1"/><rect x="1.8" y="9.1" width="5" height="1.1"/></g></svg>
<div class="t" style="left:28px;top:614.5px;font-size:13.5px;color:#d0d0d0;letter-spacing:-0.056px;">Console</div>
<svg class="ab" style="left:102.4px;top:618.2px" width="13.6" height="13.6" viewBox="0 0 14 14"><path d="M3.2 2.9 L11 2.9 L11 11 L4 11 M2.9 3.2 L2.9 8" stroke="#9fa3a5" stroke-width="1" fill="none"/><g fill="#d4d8da"><rect x="0.8" y="0.7" width="4.4" height="4.4" rx=".7"/><rect x="8.7" y="0.7" width="4.4" height="4.4" rx=".7"/><rect x="8.7" y="8.4" width="4.4" height="4.4" rx=".7"/></g><path d="M0.3 6.8 L4.9 9.9 L0.3 13Z" fill="#4be0c8"/></svg>
<div class="t" style="left:121px;top:614.5px;font-size:13.5px;color:#d0d0d0;letter-spacing:-0.22px;">Animator</div>
<svg class="ab" style="left:1264.8px;top:621.2px" width="9.6" height="6.4" viewBox="0 0 10 7"><path d="M0.3 0.5 L9.7 0.5 L5 6.8Z" fill="#dedede"/></svg>
<div class="ab" style="left:2px;top:636.6px;width:1278px;height:21.6px;background:#35363b;"></div>
<div class="t" style="left:8px;top:637.5px;font-size:13.4px;color:#cfcfcf;letter-spacing:-0.221px;">Clear</div>
<div class="ab" style="left:44.6px;top:636.6px;width:1px;height:21.6px;background:#2a2b2f;"></div>
<div class="ab" style="left:45.8px;top:636.6px;width:62.6px;height:21.6px;background:#47484d;"></div>
<div class="t" style="left:51px;top:637.5px;font-size:13.4px;color:#d4d4d4;letter-spacing:-0.02px;">Collapse</div>
<div class="ab" style="left:1151.8px;top:636.6px;width:126.4px;height:21.7px;background:#47484d;"></div>
<div class="ab" style="left:1196.8px;top:636.6px;width:1.2px;height:21.7px;background:#2e2f33;"></div>
<div class="ab" style="left:1237.9px;top:636.6px;width:1.1px;height:21.7px;background:#2e2f33;"></div>
<svg class="ab" style="left:1157.6px;top:640px" width="14.4" height="15.3" viewBox="0 0 16 17"><circle cx="7.6" cy="7.7" r="7.1" fill="#f4f4f4"/><path d="M9.6 13.6 L13.9 16.4 L13.6 10.6Z" fill="#f4f4f4"/><rect x="6.75" y="3.3" width="1.8" height="7.2" rx="0.7" fill="#606065"/><rect x="6.8" y="11" width="1.7" height="1.5" rx=".5" fill="#606065"/></svg>
<div class="t" style="left:1177px;top:637.5px;font-size:13.4px;color:#d0d0d0;letter-spacing:0.698px;">73</div>
<svg class="ab" style="left:1205.4px;top:640.2px" width="14.4" height="14" viewBox="0 0 15 14"><path d="M7.5 0.9 L14.3 13.2 L0.7 13.2Z" fill="#f6b904" stroke="#f6b904" stroke-width="1" stroke-linejoin="round"/><rect x="6.8" y="4.6" width="1.4" height="5" fill="#8a7430"/><rect x="6.8" y="10.4" width="1.4" height="1.4" fill="#8a7430"/></svg>
<div class="t" style="left:1225px;top:637.5px;font-size:13.4px;color:#d0d0d0;">0</div>
<svg class="ab" style="left:1245.6px;top:640.3px" width="13.8" height="13.8" viewBox="0 0 14 14"><path d="M4.2 0.3 L9.8 0.3 L13.7 4.2 L13.7 9.8 L9.8 13.7 L4.2 13.7 L0.3 9.8 L0.3 4.2Z" fill="#f5693d"/><rect x="6.3" y="3" width="1.4" height="5.6" rx=".5" fill="#c4502c"/><rect x="6.3" y="9.6" width="1.4" height="1.5" rx=".4" fill="#c4502c"/></svg>
<div class="t" style="left:1265px;top:637.5px;font-size:13.4px;color:#d0d0d0;">0</div>
<div class="ab" style="left:2px;top:659.2px;width:1265px;height:29.45px;background:#35363b;"></div>
<svg class="ab" style="left:8.7px;top:665.15px" width="15.8" height="16.79" viewBox="0 0 16 17"><circle cx="7.6" cy="7.7" r="7.1" fill="#f4f4f4"/><path d="M9.6 13.6 L13.9 16.4 L13.6 10.6Z" fill="#f4f4f4"/><rect x="6.75" y="3.3" width="1.8" height="7.2" rx="0.7" fill="#606065"/><rect x="6.8" y="11" width="1.7" height="1.5" rx=".5" fill="#606065"/></svg>
<div class="t" style="left:31px;top:663.5px;font-size:13.2px;color:#cdcdcd;letter-spacing:-1.129px;">0.1</div>
<div class="ab" style="left:2px;top:688.45px;width:1265px;height:29.45px;background:#393a3f;"></div>
<svg class="ab" style="left:8.7px;top:694.4px" width="15.8" height="16.79" viewBox="0 0 16 17"><circle cx="7.6" cy="7.7" r="7.1" fill="#f4f4f4"/><path d="M9.6 13.6 L13.9 16.4 L13.6 10.6Z" fill="#f4f4f4"/><rect x="6.75" y="3.3" width="1.8" height="7.2" rx="0.7" fill="#606065"/><rect x="6.8" y="11" width="1.7" height="1.5" rx=".5" fill="#606065"/></svg>
<div class="t" style="left:30px;top:692.5px;font-size:13.2px;color:#cdcdcd;letter-spacing:0.024px;">LunaApplication.window.OnResize: Window.InnerWidth: 486, Window.InnerHeight: 901</div>
<div class="ab" style="left:2px;top:717.7px;width:1265px;height:29.45px;background:#35363b;"></div>
<svg class="ab" style="left:8.7px;top:723.65px" width="15.8" height="16.79" viewBox="0 0 16 17"><circle cx="7.6" cy="7.7" r="7.1" fill="#f4f4f4"/><path d="M9.6 13.6 L13.9 16.4 L13.6 10.6Z" fill="#f4f4f4"/><rect x="6.75" y="3.3" width="1.8" height="7.2" rx="0.7" fill="#606065"/><rect x="6.8" y="11" width="1.7" height="1.5" rx=".5" fill="#606065"/></svg>
<div class="t" style="left:30px;top:721.5px;font-size:13.2px;color:#cdcdcd;letter-spacing:0.014px;">LunaApplication.window.OnResize: Window.InnerWidth: 876, Window.InnerHeight: 1623</div>
<div class="ab" style="left:2px;top:746.95px;width:1265px;height:29.45px;background:#393a3f;"></div>
<svg class="ab" style="left:8.7px;top:752.9px" width="15.8" height="16.79" viewBox="0 0 16 17"><circle cx="7.6" cy="7.7" r="7.1" fill="#f4f4f4"/><path d="M9.6 13.6 L13.9 16.4 L13.6 10.6Z" fill="#f4f4f4"/><rect x="6.75" y="3.3" width="1.8" height="7.2" rx="0.7" fill="#606065"/><rect x="6.8" y="11" width="1.7" height="1.5" rx=".5" fill="#606065"/></svg>
<div class="t" style="left:30px;top:750.5px;font-size:13.2px;color:#cdcdcd;letter-spacing:0.055px;">LunaApplication.window.SetTimeout: Window.InnerWidth: 876, Window.InnerHeight: 1623</div>
<div class="ab" style="left:2px;top:776.2px;width:1265px;height:29.45px;background:#35363b;"></div>
<svg class="ab" style="left:8.7px;top:782.15px" width="15.8" height="16.79" viewBox="0 0 16 17"><circle cx="7.6" cy="7.7" r="7.1" fill="#f4f4f4"/><path d="M9.6 13.6 L13.9 16.4 L13.6 10.6Z" fill="#f4f4f4"/><rect x="6.75" y="3.3" width="1.8" height="7.2" rx="0.7" fill="#606065"/><rect x="6.8" y="11" width="1.7" height="1.5" rx=".5" fill="#606065"/></svg>
<div class="t" style="left:30px;top:779.5px;font-size:13.2px;color:#cdcdcd;letter-spacing:0.014px;">LunaApplication.window.OnResize: Window.InnerWidth: 872, Window.InnerHeight: 1623</div>
<div class="ab" style="left:1243.6px;top:752.9px;width:16.6px;height:16.6px;border-radius:50%;background:#4a4b50"></div>
<div class="t" style="left:1248px;top:751.0px;font-size:12px;color:#d4d4d4;">2</div>
<div class="ab" style="left:2px;top:658.2px;width:1278px;height:1.6px;background:#1a1b1e;"></div>
<div class="ab" style="left:1267.1px;top:659.8px;width:12.9px;height:141px;background:#212227;"></div>
<div class="ab" style="left:1268px;top:660.8px;width:10px;height:31.8px;background:#5f6065;border-radius:5px"></div>
</div></body></html>
